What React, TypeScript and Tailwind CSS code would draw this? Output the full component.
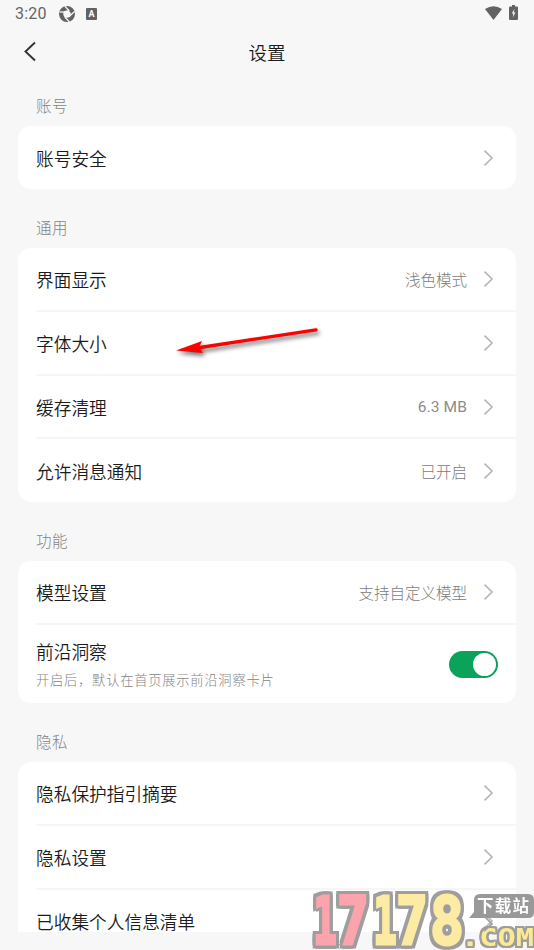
import type { ReactNode } from "react";

type Row = {
  title: string;
  value?: string;
  latin?: boolean;
};

const generalRows: Row[] = [
  { title: "界面显示", value: "浅色模式" },
  { title: "字体大小" },
  { title: "缓存清理", value: "6.3 MB", latin: true },
  { title: "允许消息通知", value: "已开启" },
];

const privacyRows: Row[] = [
  { title: "隐私保护指引摘要" },
  { title: "隐私设置" },
  { title: "已收集个人信息清单" },
];

// Digits of the corner logo, each squeezed to its own width
const logoDigits = [
  { char: "1", x: 5, width: 24, color: "#fca0a7" },
  { char: "7", x: 29, width: 32, color: "#fca0a7" },
  { char: "1", x: 65, width: 24, color: "#fdea9f" },
  { char: "7", x: 88, width: 32, color: "#fdea9f" },
  { char: "8", x: 122, width: 34, color: "#fdea9f" },
];

function Chevron() {
  return (
    <svg width="12" height="18" viewBox="0 0 12 18" fill="none" className="ml-4 shrink-0">
      <path d="M1.5 1.7 9 9l-7.5 7.3" stroke="#b8b8b8" strokeWidth="1.7" />
    </svg>
  );
}

function StatusBar() {
  return (
    <div className="flex h-7 items-center px-[15px] text-[#666]">
      <span className="w-8 whitespace-nowrap font-[Roboto] text-base leading-7 tracking-[0.2px]">3:20</span>
      <svg width="16" height="16" viewBox="0 0 16 16" fill="none" className="-mt-[1px] ml-3">
        <circle cx="8" cy="8" r="5.8" stroke="#626262" strokeWidth="4.4" />
        <path
          d="M.5 5.8 5 6.2M5.8 0 10.3 5M15.6 5.5 11 9.8M10.5 16 5.8 11"
          stroke="#f7f7f7"
          strokeWidth="1.3"
        />
        <path d="M4.6 5.2 9 4.4 11.4 7.2 11.2 11 7.4 11.6 4.8 9Z" fill="#f7f7f7" />
      </svg>
      <span className="ml-[11px] flex h-3 w-[11px] items-center justify-center rounded-[1px] bg-[#626262] font-[Roboto] text-[9px] font-bold leading-none text-white">
        A
      </span>
      <svg width="17" height="14" viewBox="0 0 17 14" className="-mt-[2px] ml-auto">
        <path d="M0 3Q8.5-2.5 17 3L8.5 14Z" fill="#626262" />
      </svg>
      <svg width="9" height="15" viewBox="0 0 9 15" className="-mt-[3px] ml-[7px] mr-[1px]">
        <path d="M3 0h3v1.5h2q1 0 1 1V14q0 1-1 1H1q-1 0-1-1V2.5q0-1 1-1h2Z" fill="#626262" />
        <path d="M5.5 3.7 2.8 8.6h1.6L3.7 12.5 6.5 7.5H4.8Z" fill="#f7f7f7" />
      </svg>
    </div>
  );
}

function Section({ label, children }: { label: string; children: ReactNode }) {
  return (
    <section>
      <h2 className="flex h-[59.3px] items-end pb-[9px] pl-9 text-[15.5px] font-light leading-6 tracking-[0.6px] text-[#848484]">
        {label}
      </h2>
      <div className="mx-[18px] overflow-hidden rounded-[13px] bg-white">{children}</div>
    </section>
  );
}

function SettingRow({ row, last }: { row: Row; last?: boolean }) {
  return (
    <div className="pl-[18px]">
      <div
        className={`flex items-center pr-[21px] ${
          last ? "h-[62.5px]" : "h-[63.8px] border-b-2 border-[#f6f6f6]"
        }`}
      >
        <span className="flex-1 text-[17.7px] font-[350] leading-7 text-[#1c1c1c]">{row.title}</span>
        {row.value && (
          <span
            className={
              row.latin
                ? "pt-[2px] font-[Roboto] text-[15.5px] tracking-[0.1px] text-[#8c8c8c]"
                : "pt-[1px] text-[15.5px] font-light text-[#7c7c7c]"
            }
          >
            {row.value}
          </span>
        )}
        <Chevron />
      </div>
    </div>
  );
}

function Arrow() {
  return (
    <svg
      width="160"
      height="44"
      viewBox="0 0 160 44"
      className="absolute left-[170px] top-[320px] drop-shadow-[2px_3px_2px_rgba(0,0,0,0.55)]"
    >
      <path d="M146 9.8 30 27.5" stroke="#f00" strokeWidth="3.3" strokeLinecap="round" />
      <path d="M6 30.5 32 21 29 27.5 33 33Z" fill="#f00" />
    </svg>
  );
}

function Watermark() {
  return (
    <svg
      width="226"
      height="64"
      viewBox="0 0 226 64"
      className="absolute bottom-0 right-0 opacity-95"
      fontFamily="'DejaVu Sans Mono', monospace"
      fontWeight="bold"
    >
      {/* hard shadows on four sides make the blocky grey outline */}
      {logoDigits.map((d) => (
        <text
          key={d.x}
          x={d.x}
          y="58"
          fontSize="66"
          fill={d.color}
          stroke={d.color}
          strokeWidth="3"
          textLength={d.width}
          lengthAdjust="spacingAndGlyphs"
          className="[filter:drop-shadow(3px_0_0_#999)_drop-shadow(-3px_0_0_#999)_drop-shadow(0_3px_0_#999)_drop-shadow(0_-3px_0_#999)]"
        >
          {d.char}
        </text>
      ))}
      <path d="M172 8h48q6 0 6 6v12q0 6-6 6h-59l5-6V14q0-6 6-6Z" fill="#949494" />
      <text
        x="169"
        y="26"
        fontFamily="'Noto Sans CJK SC', sans-serif"
        fontSize="16.5"
        fill="#fff"
        textLength="52"
      >
        下载站
      </text>
      <text
        x="153"
        y="60"
        fontSize="25"
        fill="#fdea8c"
        textLength="73"
        lengthAdjust="spacingAndGlyphs"
        className="[filter:drop-shadow(2px_0_0_#999)_drop-shadow(-2px_0_0_#999)_drop-shadow(0_2px_0_#999)_drop-shadow(0_-2px_0_#999)]"
      >
        .COM
      </text>
      <path d="M176 30 184 38l-8 7" stroke="#999" strokeWidth="1.7" fill="none" />
    </svg>
  );
}

export default function App() {
  return (
    <div className="relative h-[950px] w-[534px] overflow-hidden bg-[#f7f7f7] font-['Noto_Sans_CJK_SC',sans-serif]">
      <StatusBar />
      <header className="relative flex h-[38px] items-end justify-center">
        <svg width="14" height="22" viewBox="0 0 14 22" fill="none" className="absolute left-[23px] top-[13px]">
          <path d="M12 1.5 2.5 10.5 12 19.5" stroke="#333" strokeWidth="1.9" />
        </svg>
        <h1 className="text-[18.5px] font-[350] leading-7 text-[#1c1c1c]">设置</h1>
      </header>

      <main className="mt-[1px] h-[865px] overflow-hidden">
        <Section label="账号">
          <SettingRow row={{ title: "账号安全" }} last />
        </Section>
        <Section label="通用">
          {generalRows.map((row, i) => (
            <SettingRow key={row.title} row={row} last={i === generalRows.length - 1} />
          ))}
        </Section>
        <Section label="功能">
          <SettingRow row={{ title: "模型设置", value: "支持自定义模型" }} />
          <div className="flex h-[78px] items-center justify-between px-[18px]">
            <div>
              <p className="text-[17.7px] font-[350] leading-7 text-[#1c1c1c]">前沿洞察</p>
              <p className="mt-[3px] text-[13.3px] font-light leading-6 tracking-[0.73px] text-[#848484]">
                开启后，默认在首页展示前沿洞察卡片
              </p>
            </div>
            <button
              role="switch"
              aria-checked="true"
              aria-label="前沿洞察"
              className="flex h-[27px] w-[49px] items-center justify-end rounded-full bg-[#0ba25a] pr-[2px]"
            >
              <span className="size-[23px] rounded-full bg-white" />
            </button>
          </div>
        </Section>
        <Section label="隐私">
          {privacyRows.map((row) => (
            <SettingRow key={row.title} row={row} />
          ))}
        </Section>
      </main>

      <Arrow />
      <Watermark />
    </div>
  );
}
